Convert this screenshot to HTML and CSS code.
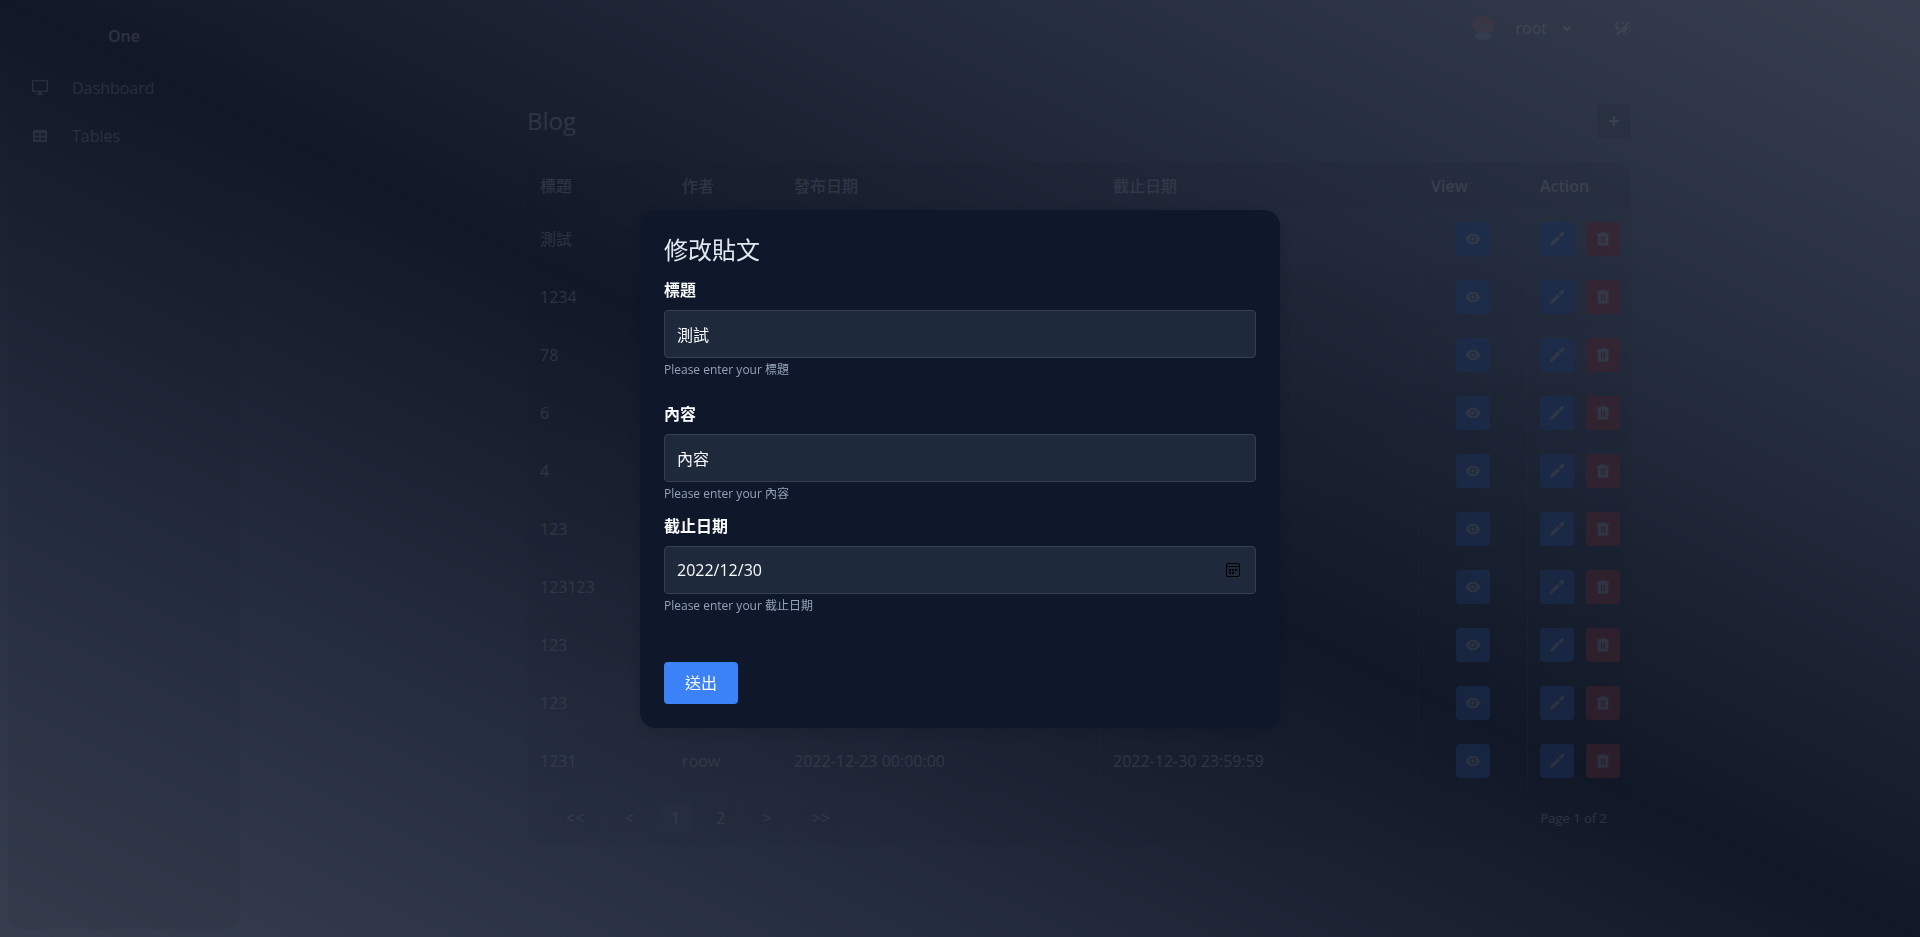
FILE: index.html
```html
<!DOCTYPE html>
<html lang="zh-Hant">
<head>
<meta charset="utf-8">
<meta name="viewport" content="width=device-width, initial-scale=1">
<title>Blog</title>
<link rel="stylesheet" href="styles.css">
</head>
<body>
<svg class="sprite" aria-hidden="true">
  <symbol id="eye" viewBox="0 0 24 24"><path fill-rule="evenodd" d="M12 4C7 4 2.700 7.300 1 12c1.700 4.700 6 8 11 8s9.300-3.300 11-8c-1.700-4.700-6-8-11-8zM12 17a5 5 0 1 1 0-10 5 5 0 0 1 0 10zm0-8a3 3 0 1 0 0 6 3 3 0 0 0 0-6z"/></symbol>
  <symbol id="pen" viewBox="0 0 24 24"><path d="M14.500 6l4-4c1-1 2.600-1 3.500 0s1 2.500 0 3.500l-4 4zM13.300 7.200l3.500 3.500-8.300 8.500C6.500 21.200 4 22.500 1.500 22.500c0-2.500 1.300-5 3.300-7z"/></symbol>
  <symbol id="bin" viewBox="0 0 24 24"><path fill-rule="evenodd" d="M8.500 2h7v1.500H21V6h-1v14c0 1.100-.9 2-2 2H6c-1.100 0-2-.9-2-2V6H3V3.500h5.500zM9 8v10h2V8zm4 0v10h2V8z"/></symbol>
</svg>
<div class="app">
  <aside class="sidebar">
    <h2 class="brand">One</h2>
    <nav class="menu">
      <a class="menu-item" href="#"><svg class="icon" viewBox="0 0 16 16"><path fill-rule="evenodd" d="M1 0h14a1 1 0 0 1 1 1v10a1 1 0 0 1-1 1H9v1.500h2V15H5v-1.500h2V12H1a1 1 0 0 1-1-1V1a1 1 0 0 1 1-1zm.5 1.200v9.600h13V1.200z"/></svg>Dashboard</a>
      <a class="menu-item" href="#"><svg class="icon" viewBox="0 0 16 16"><path fill-rule="evenodd" d="M2.500 2h11A1.500 1.500 0 0 1 15 3.500v9a1.500 1.500 0 0 1-1.500 1.500h-11A1.500 1.500 0 0 1 1 12.500v-9A1.500 1.500 0 0 1 2.500 2zM3 5v2.500h4V5zm6 0v2.500h4V5zM3 9.500V12h4V9.500zm6 0V12h4V9.500z"/></svg>Tables</a>
    </nav>
  </aside>
  <div class="main">
    <header class="topbar">
      <svg class="avatar" viewBox="0 0 22 24"><path fill="#dcaeb4" d="M11 0C4.500 0 0 4 0 9c0 4 2 7 6 7h10c4 0 6-3 6-7 0-5-4.500-9-11-9z"/><circle cx="11" cy="9.500" r="5" fill="#b8bcc8"/><path fill="#dcaeb4" d="M6 8c1-3 3-4 5-4s4 1 5 4c-2 0-4-1-5-2-1 1-3 2-5 2zM9 12.500h4V17H9z"/><path fill="#b8dcf4" d="M3 21c0-3 3-5 6-5 1 1 3 1 4 0 3 0 6 2 6 5-2 2-5 3-8 3s-6-1-8-3z"/></svg>
      <button class="user" type="button">root<svg class="chevron" viewBox="0 0 8 8"><path d="M.5 2.500L4 6l3.500-3.500"/></svg></button>
      <button class="theme" type="button" aria-label="Theme"><svg class="icon" viewBox="0 0 16 16"><path d="M1.500 14L13.800 1.200l1.200 1.200L2.700 15.200z"/><path d="M4.500 1.300A4.700 4.700 0 0 0 2.500 10L4.300 8.400A3.800 3.800 0 0 1 4.500 1.300zM7.500.3l.7 1.500 1.500.7-1.500.7-.7 1.500-.7-1.500-1.500-.7 1.500-.7zM6 12.500a6 6 0 0 0 6.500-6.500zM13.500 6l2 .8-1.500 1.600zM13.800 9.600l2.200.9-2.200 1.200zM12.500 12l2.200 2.300-2.600-.5zM9.500 13.100l.4 2.800-1.900-2z"/></svg></button>
    </header>
    <main class="content">
      <div class="page-head">
        <h1 class="page-title">Blog</h1>
        <button class="square add" type="button" aria-label="Add"><svg class="plus" viewBox="0 0 10 10"><path d="M5 0v10M0 5h10"/></svg></button>
      </div>
      <section class="card">
        <table class="posts">
          <colgroup><col class="c-title"><col class="c-author"><col class="c-date"><col class="c-until"><col class="c-view"><col class="c-action"></colgroup>
          <thead><tr><th>標題</th><th>作者</th><th>發布日期</th><th>截止日期</th><th class="strong">View</th><th class="strong">Action</th></tr></thead>
          <tbody id="rows"></tbody>
        </table>
        <footer class="pager">
          <div class="pages">
            <button class="page double" type="button">&lt;&lt;</button>
            <button class="page single" type="button">&lt;</button>
            <button class="page current" type="button">1</button>
            <button class="page" type="button">2</button>
            <button class="page single" type="button">&gt;</button>
            <button class="page double" type="button">&gt;&gt;</button>
          </div>
          <span class="count">Page 1 of 2</span>
        </footer>
      </section>
    </main>
  </div>
</div>
<div class="overlay">
  <form class="modal" role="dialog" aria-labelledby="modal-title">
    <h2 class="modal-title" id="modal-title">修改貼文</h2>
    <div class="field spaced">
      <label class="label" for="title">標題</label>
      <input class="input" id="title" type="text" value="測試">
      <p class="hint">Please enter your 標題</p>
    </div>
    <div class="field">
      <label class="label" for="body">內容</label>
      <input class="input" id="body" type="text" value="內容">
      <p class="hint">Please enter your 內容</p>
    </div>
    <div class="field">
      <label class="label" for="due">截止日期</label>
      <div class="date">
        <input class="input" id="due" type="text" value="2022/12/30">
        <button class="calendar" type="button" aria-label="Calendar"><svg viewBox="0 0 14 14"><rect x=".5" y=".5" width="13" height="13" rx="1.500"/><path d="M1 3.500h12"/><path class="dots" d="M3 6h2v2H3zm3 0h2v2H6zm3 0h2v2H9zM3 9h2v2H3zm3 0h2v2H6z"/></svg></button>
      </div>
      <p class="hint">Please enter your 截止日期</p>
    </div>
    <button class="submit" type="submit">送出</button>
  </form>
</div>
<script src="rows.js"></script>
</body>
</html>
```
FILE: styles.css
```css
* { box-sizing: border-box; }
body, h1, h2, p { margin: 0; font-weight: 400; }
body {
  height: 100vh;
  overflow: hidden;
  font: 16px/24px "Open Sans", "Noto Sans CJK TC", sans-serif;
  color: rgba(241, 245, 249, .6);
  background: linear-gradient(to top right, #c8d6ec, #72849f 24%, #111827, #72849f 76%, #c8d6ec);
}
button, input { font: inherit; color: inherit; }
button { border: 0; padding: 0; background: none; cursor: pointer; }
svg { display: block; fill: currentColor; }
.sprite { position: absolute; width: 0; height: 0; }
.icon { width: 16px; height: 16px; }

.app { display: flex; height: 100%; padding: 8px; }
.sidebar {
  flex: 0 0 232px;
  padding: 16px 24px;
  border-radius: 16px;
  background: rgba(17, 24, 39, .08);
}
.brand { font-size: 16px; line-height: 24px; font-weight: 600; text-align: center; }
.menu { display: grid; gap: 24px; padding-top: 28px; color: rgba(241, 245, 249, .5); }
.menu-item { display: flex; align-items: center; gap: 24px; color: inherit; text-decoration: none; }

.main { flex: 1; padding: 0 281px 0 287px; }
.topbar { display: flex; align-items: center; justify-content: flex-end; height: 40px; color: #f8fafc; }
.avatar { width: 22px; height: 24px; margin-right: 22px; }
.user { display: flex; align-items: center; gap: 16px; margin-right: 44px; }
.chevron { width: 8px; height: 8px; fill: none; stroke: currentColor; stroke-width: 2; }

.page-head { display: flex; align-items: center; justify-content: space-between; padding: 56px 0 24px; }
.page-title { font-size: 24px; line-height: 32px; }
.square { display: grid; place-items: center; flex: none; width: 34px; height: 34px; border-radius: 4px; }
.add { background: rgba(17, 24, 39, .12); color: #e2e8f0; }
.plus { width: 10px; height: 10px; stroke: currentColor; stroke-width: 2; }

.card { border-radius: 16px; overflow: hidden; background: rgba(17, 24, 39, .06); }
.posts { width: 100%; table-layout: fixed; border-collapse: separate; border-spacing: 0; }
.c-title { width: 142px; }
.c-author { width: 112px; }
.c-date { width: 319px; }
.c-until { width: 318px; }
.c-view { width: 109px; }
.c-action { width: 104px; }
.posts th { height: 48px; padding: 0 12px; border-left: 1px solid transparent; text-align: left; font-weight: 500; background: rgba(17, 24, 39, .05); }
.posts .strong { font-weight: 600; color: rgba(241, 245, 249, .8); }
.posts td { height: 58px; padding: 0 12px; border-left: 1px solid rgba(148, 163, 184, .15); }
.posts td:first-child { border-left-color: transparent; }
.posts td:last-child { padding-right: 0; }
.posts tbody tr:nth-child(even) { background: rgba(17, 24, 39, .04); }
.posts .square { opacity: .6; color: #e5e7eb; }
.blue { background: #3b82f6; }
.red { background: #ef4444; }
.actions { display: flex; gap: 12px; }
.posts .view .square { margin: 0 auto; }

.pager { display: flex; align-items: center; justify-content: space-between; padding: 14px 24px; }
.pages { display: flex; gap: 12px; }
.page { min-width: 33px; height: 28px; border-radius: 4px; background: rgba(17, 24, 39, .04); }
.single { min-width: 36px; }
.double { min-width: 48px; }
.current { background: rgba(148, 163, 184, .2); }
.count { font-size: 13px; line-height: 20px; }

.overlay {
  position: fixed;
  inset: 0;
  display: grid;
  place-items: center;
  background: rgba(17, 24, 39, .8);
}
.modal {
  width: 640px;
  padding: 24px;
  border-radius: 16px;
  color: #f8fafc;
  background: #0f172a;
  box-shadow: 0 4px 12px rgba(0, 0, 0, .12);
}
.modal-title { font-size: 24px; line-height: 32px; color: #e2e8f0; }
.field { padding-top: 12px; }
.spaced { padding-bottom: 12px; }
.label { display: block; margin-bottom: 8px; font-weight: 600; }
.input {
  display: block;
  width: 100%;
  height: 48px;
  padding: 0 12px;
  border: 1px solid #334155;
  border-radius: 4px;
  outline: 0;
  background: #1e293b;
}
.hint { padding-top: 4px; font-size: 12px; line-height: 16px; color: #94a3b8; }
.date { position: relative; }
.calendar { position: absolute; right: 16px; top: 17px; color: #000; }
.calendar svg { width: 14px; height: 14px; fill: none; stroke: currentColor; stroke-width: 1; }
.calendar .dots { fill: currentColor; stroke: none; }
.submit {
  height: 42px;
  margin-top: 48px;
  padding: 0 21px;
  border-radius: 4px;
  background: #3b82f6;
}
```
FILE: rows.js
```js
const titles = ["測試", "1234", "78", "6", "4", "123", "123123", "123", "123", "1231"];
const icon = (name) => `<svg class="icon"><use href="#${name}"/></svg>`;
document.getElementById("rows").innerHTML = titles.map((title) => `
  <tr>
    <td>${title}</td><td>roow</td><td>2022-12-23 00:00:00</td><td>2022-12-30 23:59:59</td>
    <td class="view"><button class="square blue" type="button" aria-label="View">${icon("eye")}</button></td>
    <td><div class="actions">
      <button class="square blue" type="button" aria-label="Edit">${icon("pen")}</button>
      <button class="square red" type="button" aria-label="Delete">${icon("bin")}</button>
    </div></td>
  </tr>`).join("");
```
